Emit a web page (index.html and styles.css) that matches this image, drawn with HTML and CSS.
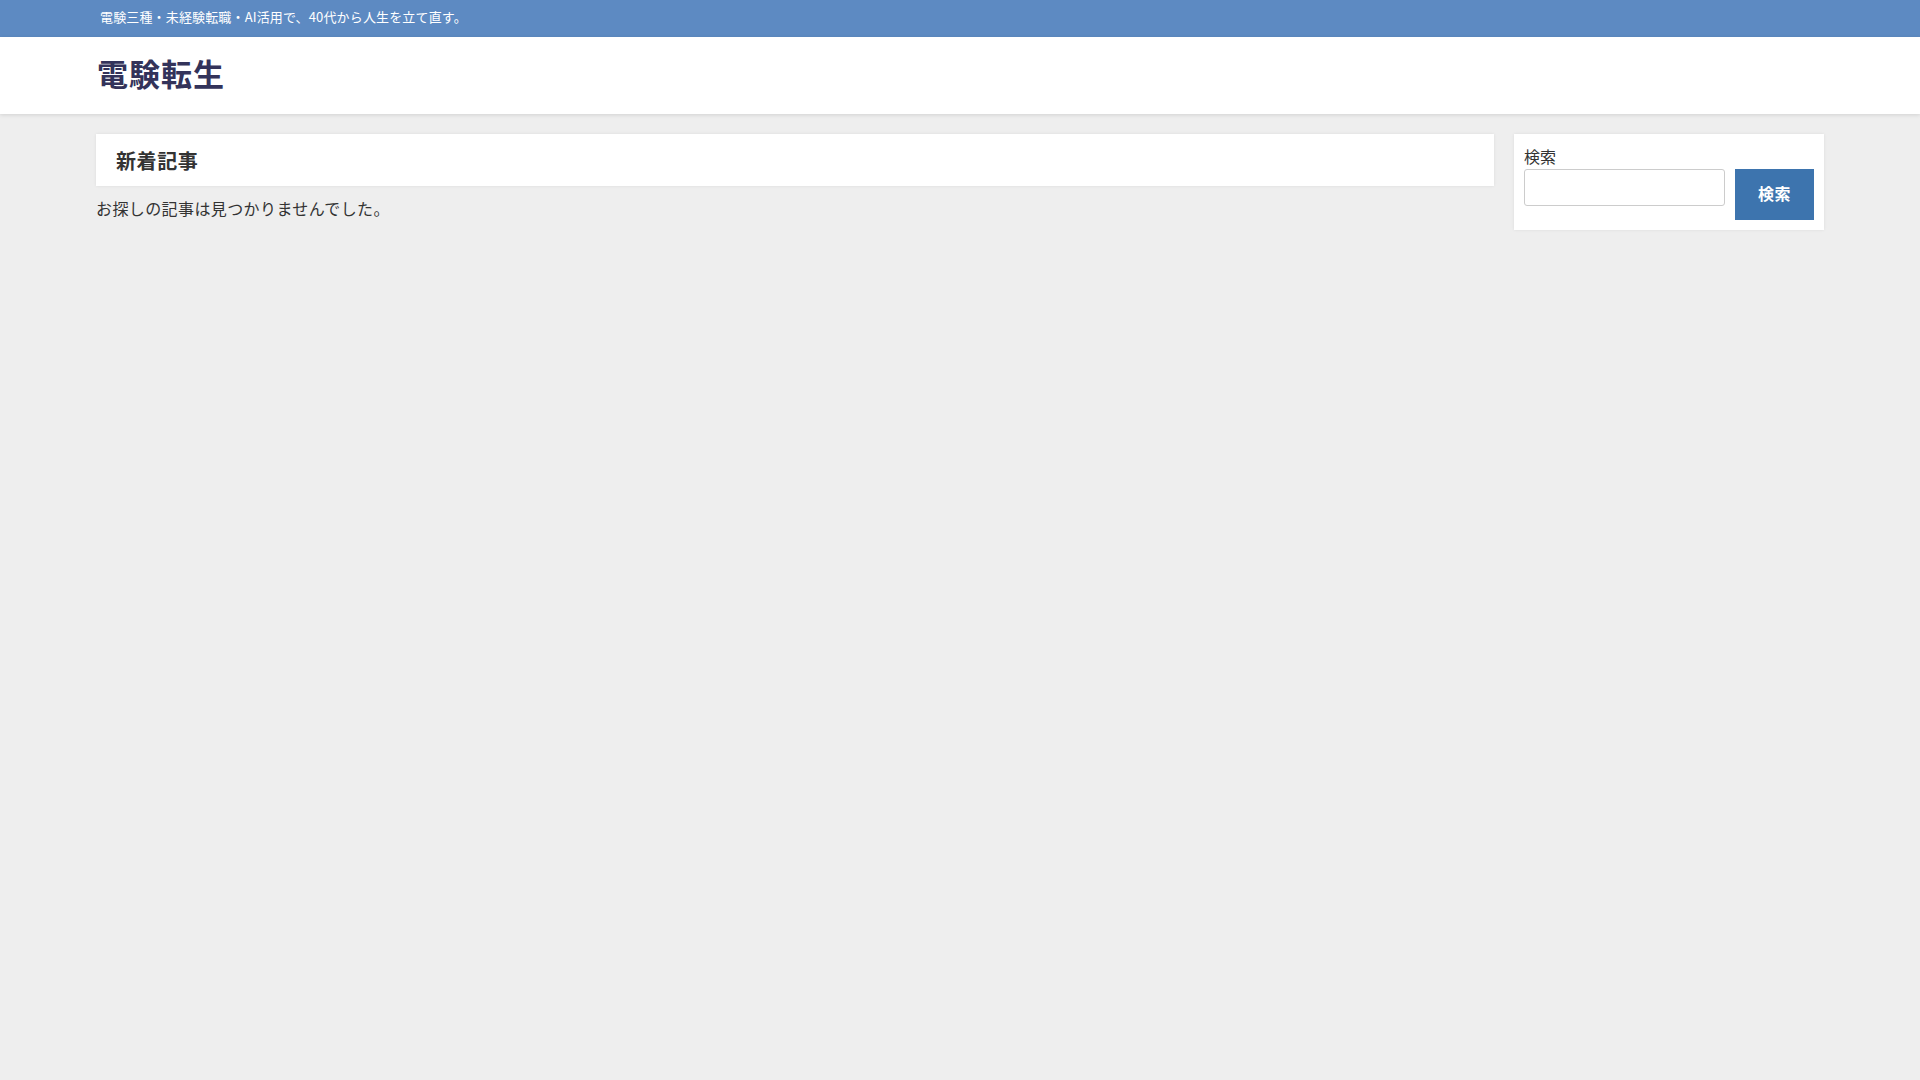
FILE: index.html
```html
<!DOCTYPE html>
<html lang="ja">
<head>
<meta charset="utf-8">
<title>電験転生</title>
<link rel="stylesheet" href="styles.css">
</head>
<body>
<div class="topbar">
  <div class="wrap">
    <p class="tagline">電験三種・未経験転職・AI活用で、40代から人生を立て直す。</p>
  </div>
</div>
<header class="header">
  <div class="wrap">
    <a class="site-title" href="#">電験転生</a>
  </div>
</header>
<div class="content wrap">
  <main class="main">
    <div class="card heading-card">
      <h1 class="page-title">新着記事</h1>
    </div>
    <p class="not-found">お探しの記事は見つかりませんでした。</p>
  </main>
  <aside class="sidebar">
    <div class="card widget">
      <label class="search-label" for="s">検索</label>
      <div class="search-row">
        <input class="search-input" id="s" type="text">
        <button class="search-button" type="button">検索</button>
      </div>
    </div>
  </aside>
</div>
</body>
</html>
```

FILE: styles.css
```css
html, body {
  margin: 0;
  padding: 0;
}
body {
  background: #eeeeee;
  color: #333333;
  font-family: "Noto Sans CJK JP", "Liberation Sans", sans-serif;
  font-size: 16px;
  min-height: 1080px;
}
.wrap {
  width: 1728px;
  margin: 0 auto;
}
.topbar {
  background: #5d8ac2;
  height: 37px;
}
.tagline {
  margin: 0;
  padding-left: 4px;
  color: #ffffff;
  font-size: 13px;
  line-height: 33px;
  letter-spacing: 0.15px;
}
.header {
  background: #ffffff;
  height: 77px;
  box-shadow: 0 1px 4px rgba(0, 0, 0, 0.12);
  position: relative;
}
.header .wrap {
  height: 77px;
  display: flex;
  align-items: center;
}
.site-title {
  margin-left: 1px;
  color: #33335a;
  font-size: 31px;
  font-weight: bold;
  text-decoration: none;
  line-height: 1;
  letter-spacing: 1px;
  padding-bottom: 7px;
}
.content {
  display: flex;
  gap: 20px;
  padding-top: 20px;
  align-items: flex-start;
}
.main {
  width: 1398px;
}
.sidebar {
  width: 310px;
}
.card {
  background: #ffffff;
  box-shadow: 0 0 3px rgba(0, 0, 0, 0.08);
}
.heading-card {
  height: 52px;
  display: flex;
  align-items: center;
  padding: 0 20px;
}
.page-title {
  margin: 0;
  font-size: 20px;
  font-weight: bold;
  line-height: 1;
  color: #333333;
  letter-spacing: 0.6px;
  padding-top: 1px;
}
.not-found {
  margin: 8px 0 0;
  font-size: 16px;
  line-height: 28px;
  letter-spacing: 0.4px;
}
.widget {
  padding: 11px 10px 10px;
}
.search-label {
  display: block;
  font-size: 16px;
  line-height: 22px;
  color: #333333;
  padding-bottom: 2px;
  height: 22px;
}
.search-row {
  display: flex;
  gap: 10px;
  align-items: flex-start;
}
.search-input {
  box-sizing: border-box;
  width: 201px;
  height: 37px;
  border: 1px solid #cccccc;
  border-radius: 3px;
  background: #ffffff;
  margin: 0;
  padding: 0 8px;
  font-size: 16px;
}
.search-button {
  width: 79px;
  height: 51px;
  border: none;
  margin: 0;
  background: #3d74ae;
  color: #ffffff;
  font-family: "Noto Sans CJK JP", "Liberation Sans", sans-serif;
  font-size: 16px;
  font-weight: bold;
  padding: 0 0 4px;
  letter-spacing: 0.5px;
}
```
